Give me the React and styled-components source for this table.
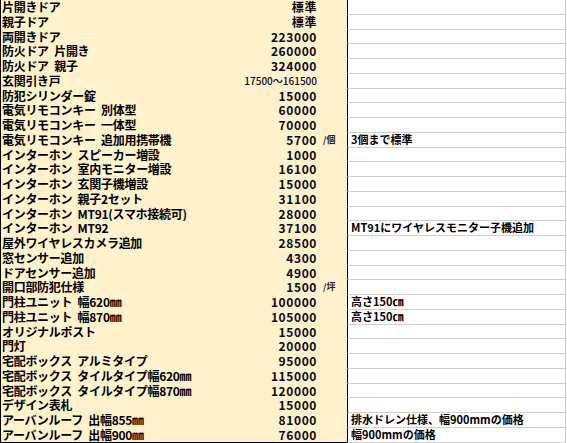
import React from "react";
import styled, { createGlobalStyle } from "styled-components";

const GlobalStyle = createGlobalStyle`
	body {
		margin: 0;
		background: #ffffff;
		font-family: "Noto Sans CJK JP", "Noto Sans", sans-serif;
		color: #000;
	}
`;

const items = [
	{ name: "片開きドア", price: "標準" },
	{ name: "親子ドア", price: "標準" },
	{ name: "両開きドア", price: "223000" },
	{ name: "防火ドア 片開き", price: "260000" },
	{ name: "防火ドア 親子", price: "324000" },
	{ name: "玄関引き戸", price: "17500～161500", small: true },
	{ name: "防犯シリンダー錠", price: "15000" },
	{ name: "電気リモコンキー 別体型", price: "60000" },
	{ name: "電気リモコンキー 一体型", price: "70000" },
	{ name: "電気リモコンキー 追加用携帯機", price: "5700", unit: "/個", note: "3個まで標準" },
	{ name: "インターホン スピーカー増設", price: "1000" },
	{ name: "インターホン 室内モニター増設", price: "16100" },
	{ name: "インターホン 玄関子機増設", price: "15000" },
	{ name: "インターホン 親子2セット", price: "31100" },
	{ name: "インターホン MT91(スマホ接続可)", price: "28000" },
	{ name: "インターホン MT92", price: "37100", note: "MT91にワイヤレスモニター子機追加" },
	{ name: "屋外ワイヤレスカメラ追加", price: "28500" },
	{ name: "窓センサー追加", price: "4300" },
	{ name: "ドアセンサー追加", price: "4900" },
	{ name: "開口部防犯仕様", price: "1500", unit: "/坪" },
	{ name: "門柱ユニット 幅620㎜", price: "100000", note: "高さ150㎝" },
	{ name: "門柱ユニット 幅870㎜", price: "105000", note: "高さ150㎝" },
	{ name: "オリジナルポスト", price: "15000" },
	{ name: "門灯", price: "20000" },
	{ name: "宅配ボックス アルミタイプ", price: "95000" },
	{ name: "宅配ボックス タイルタイプ幅620㎜", price: "115000" },
	{ name: "宅配ボックス タイルタイプ幅870㎜", price: "120000" },
	{ name: "デザイン表札", price: "15000" },
	{ name: "アーバンルーフ 出幅855㎜", price: "81000", note: "排水ドレン仕様、幅900mmの価格" },
	{ name: "アーバンルーフ 出幅900㎜", price: "76000", note: "幅900mmの価格" },
];

function App() {
	return (
		<>
			<GlobalStyle />
			<Sheet>
				{items.map((item, i) => {
					const last = i === items.length - 1;
					return (
						<Row key={i}>
							<NameCell $last={last}>{item.name}</NameCell>
							<PriceCell $last={last} $small={item.small}>
								{item.price}
							</PriceCell>
							<UnitCell $last={last}>{item.unit}</UnitCell>
							<NoteCell>{item.note}</NoteCell>
						</Row>
					);
				})}
			</Sheet>
		</>
	);
}

export default App;

const Sheet = styled.div`
	display: flex;
	flex-direction: column;
	width: 566px;
`;

const Row = styled.div`
	display: grid;
	grid-template-columns: 230px 87px 30px 219px;
	height: 14.75px;
	line-height: 14.75px;
	white-space: nowrap;
`;

const CreamCell = styled.div`
	background: #fff2cc;
	box-sizing: border-box;
	height: 14.75px;
	border-bottom: ${(p) => (p.$last ? "1px solid #000" : "none")};
`;

const NameCell = styled(CreamCell)`
	border-left: 1px solid #000;
	padding-left: 1px;
	font-size: 12px;
	font-weight: 700;
	letter-spacing: -0.3px;
	word-spacing: 3px;
`;

const PriceCell = styled(CreamCell)`
	text-align: right;
	font-size: ${(p) => (p.$small ? "10px" : "12px")};
	font-weight: ${(p) => (p.$small ? 500 : 700)};
	letter-spacing: ${(p) => (p.$small ? "0" : "0.6px")};
	color: #0a0a1a;
`;

const UnitCell = styled(CreamCell)`
	padding-left: 6px;
	font-size: 9px;
	font-weight: 700;
	color: #222;
`;

const NoteCell = styled.div`
	box-sizing: border-box;
	height: 14.75px;
	border-left: 1.5px solid #000;
	border-right: 1px solid #c8c8c8;
	border-bottom: 1px solid #d0d0d0;
	padding-left: 3px;
	font-size: 11px;
	font-weight: 700;
	line-height: 13.5px;
`;
